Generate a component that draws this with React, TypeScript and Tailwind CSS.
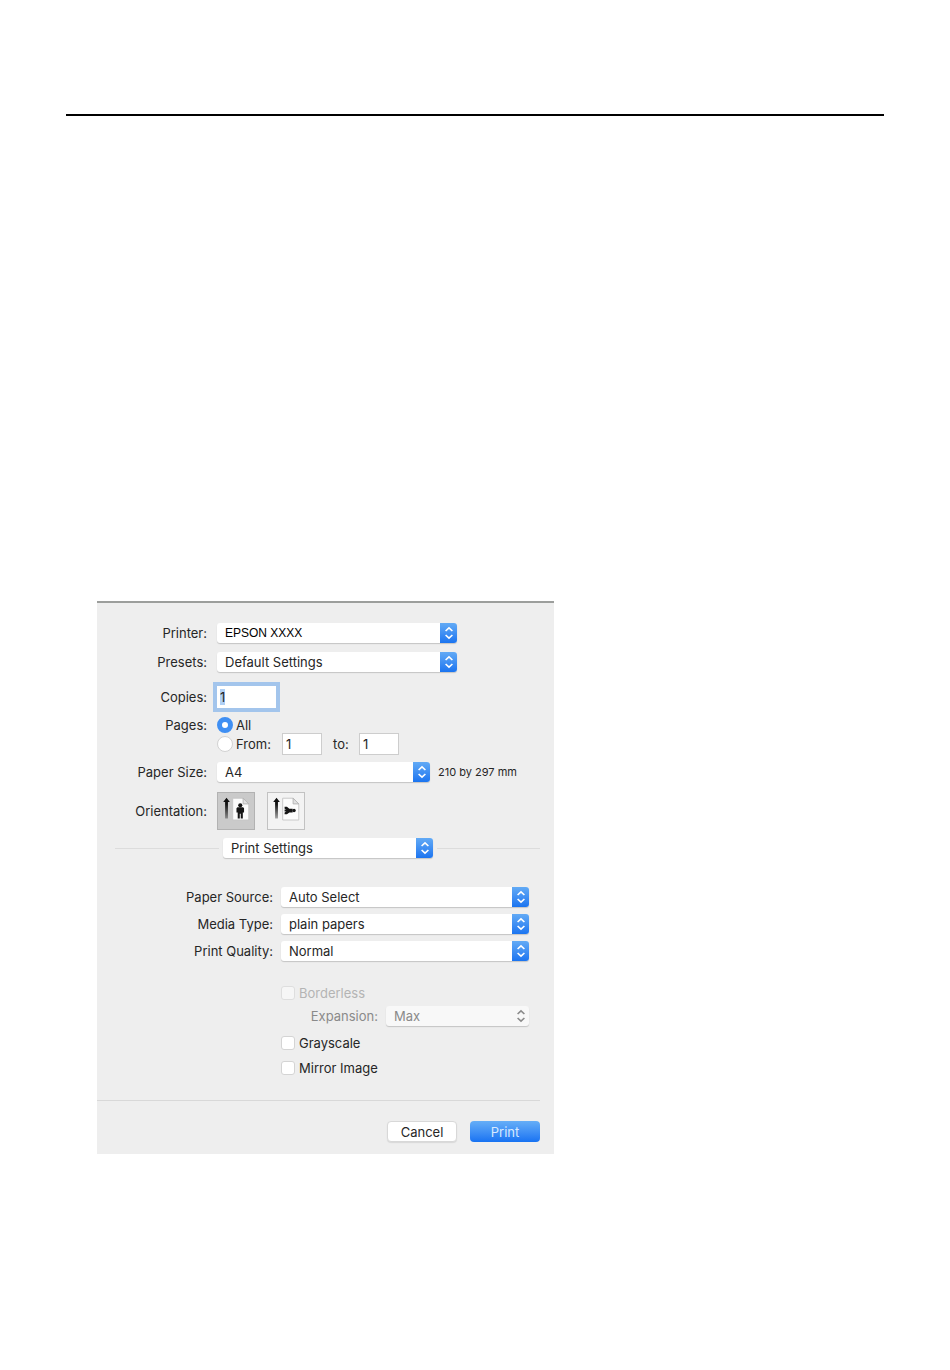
import clsx from 'clsx';
import { useEffect, useRef, useState } from 'react';
import type { ReactNode } from 'react';

type SelectFieldProps = {
  id: string;
  value: string;
  label?: string;
  className?: string;
  textClassName?: string;
  disabled?: boolean;
};

function Chevrons() {
  return (
    <svg viewBox="0 0 10 14" className="h-[14px] w-[10px]" fill="none" stroke="currentColor" strokeWidth="1.6">
      <path d="M1.6 5 5 1.8 8.4 5M1.6 9 5 12.2 8.4 9" />
    </svg>
  );
}

function SelectField({ id, value, label, className, textClassName, disabled = false }: SelectFieldProps) {
  return (
    <div className={clsx('relative h-5', className)}>
      <select
        id={id}
        aria-label={label}
        disabled={disabled}
        className={clsx(
          'block h-5 w-full appearance-none rounded-[3px] pr-5 pl-2 shadow-[0_1px_1px_#c4c4c4]',
          disabled ? 'bg-[#f8f8f8] text-[#8a8a8a] opacity-100' : 'bg-white text-[#262626]',
          textClassName,
        )}
      >
        <option>{value}</option>
      </select>
      <span
        className={clsx(
          'pointer-events-none absolute inset-y-0 right-0 flex w-[17px] items-center justify-center rounded-r-[3px]',
          disabled ? 'text-[#8a8a8a]' : 'bg-linear-to-b from-[#62aaf5] to-[#1a74f0] text-white',
        )}
      >
        <Chevrons />
      </span>
    </div>
  );
}

type RowProps = {
  label: string;
  htmlFor?: string;
  className?: string;
  wide?: boolean;
  children: ReactNode;
};

function Row({ label, htmlFor, className, wide = false, children }: RowProps) {
  const labelClass = clsx('flex-none text-right', wide ? 'mr-2 w-[176px]' : 'mr-[10px] w-[110px]');

  return (
    <div className={clsx('flex items-center', className)}>
      {htmlFor ? (
        <label htmlFor={htmlFor} className={labelClass}>
          {label}
        </label>
      ) : (
        <span className={labelClass}>{label}</span>
      )}
      {children}
    </div>
  );
}

type RadioProps = { id: string; checked: boolean; onChange: () => void };

function Radio({ id, checked, onChange }: RadioProps) {
  return (
    <input
      id={id}
      type="radio"
      name="pages"
      checked={checked}
      onChange={onChange}
      className="size-4 flex-none appearance-none rounded-full border border-[#d2d2d2] bg-white checked:border-[5px] checked:border-[#3f8ff3]"
    />
  );
}

type CheckProps = { id: string; label: string; className?: string; disabled?: boolean };

function Check({ id, label, className, disabled }: CheckProps) {
  return (
    <div className={clsx('ml-[184px] flex h-4 items-center gap-1', className)}>
      <input
        id={id}
        type="checkbox"
        disabled={disabled}
        className="size-[14px] flex-none appearance-none rounded-[3px] border border-[#d4d4d4] bg-white checked:bg-[#3f8ff3] disabled:border-[#dedede] disabled:bg-[#f6f6f6]"
      />
      <label htmlFor={id} className={disabled ? 'text-[#b4b4b4]' : undefined}>
        {label}
      </label>
    </div>
  );
}

function OrientationIcon({ landscape = false }: { landscape?: boolean }) {
  const fade = landscape ? 'fade-landscape' : 'fade-portrait';

  return (
    <svg viewBox="0 0 38 38" className="size-full">
      <defs>
        <linearGradient id={fade} x1="0" y1="0" x2="0" y2="1">
          <stop offset="0.3" stopColor="#111" />
          <stop offset="1" stopColor="#111" stopOpacity="0.35" />
        </linearGradient>
      </defs>
      <path d="M9 5 12.5 9.5H10.5V27H7.5V9.5H5.5Z" fill={`url(#${fade})`} />
      <path d="M15.5 5.5H26.5L32.5 11.5V28.5H15.5Z" fill="#fcfcfc" stroke="#c6c6c6" />
      <path d="M26.5 5.5V11.5H32.5Z" fill="#e2e2e2" stroke="#b4b4b4" />
      {landscape ? (
        <g fill="#161616">
          <path d="M17.5 14.5H20L22.5 16.5H26V20.5H22.5L20 22.5H17.5V20.5L19.5 19.5H17.5V17.5H19.5L17.5 16.5Z" />
          <circle cx="27.5" cy="18.5" r="1.8" />
        </g>
      ) : (
        <g fill="#161616">
          <circle cx="23.5" cy="13" r="2.2" />
          <path d="M20.5 15H26.5L27.5 16V20.5H26.2V27H24V22H23V27H20.8V20.5H19.5V16Z" />
        </g>
      )}
    </svg>
  );
}

function PrintDialog() {
  const [pages, setPages] = useState('all');
  const [orientation, setOrientation] = useState('portrait');
  const copiesRef = useRef<HTMLInputElement>(null);

  useEffect(() => {
    copiesRef.current?.focus();
    copiesRef.current?.select();
  }, []);

  const orientationClass = (active: boolean) =>
    clsx('size-[38px] border', active ? 'border-[#b2b2b2] bg-[#cacaca]' : 'border-[#c2c2c2] bg-[#f3f3f3]');

  return (
    <form
      onSubmit={(e) => e.preventDefault()}
      className="w-full max-w-[457px] border-t-2 border-[#9c9e9c] bg-[#eeeeee] pt-5 pb-3 text-[13px] leading-5 text-[#262626]"
    >
      <Row label="Printer:" htmlFor="printer">
        <SelectField
          id="printer"
          value="EPSON XXXX"
          className="w-[240px]"
          textClassName="font-['Liberation_Sans',Arial,sans-serif] text-[12px] text-black"
        />
      </Row>
      <Row label="Presets:" htmlFor="presets" className="mt-[9px]">
        <SelectField id="presets" value="Default Settings" className="w-[240px]" />
      </Row>
      <Row label="Copies:" htmlFor="copies" className="mt-[14px]">
        <input
          ref={copiesRef}
          id="copies"
          defaultValue="1"
          className="h-[22px] w-[59px] bg-white px-[3px] ring-4 ring-[#a3c5ec] outline-none selection:bg-[#b0d0f5] selection:text-[#262626]"
        />
      </Row>

      <Row label="Pages:" className="mt-[9px] h-4">
        <Radio id="pages-all" checked={pages === 'all'} onChange={() => setPages('all')} />
        <label htmlFor="pages-all" className="ml-[3px]">
          All
        </label>
      </Row>
      <div className="ml-[120px] flex h-[22px] items-center">
        <Radio id="pages-range" checked={pages === 'range'} onChange={() => setPages('range')} />
        <label htmlFor="pages-range" className="ml-[3px] w-[46px]">
          From:
        </label>
        <input
          aria-label="From page"
          defaultValue="1"
          className="h-[22px] w-10 border border-[#cdcdcd] bg-white px-[3px]"
        />
        <label htmlFor="page-to" className="ml-[11px] w-[26px]">
          to:
        </label>
        <input id="page-to" defaultValue="1" className="h-[22px] w-10 border border-[#cdcdcd] bg-white px-[3px]" />
      </div>

      <Row label="Paper Size:" htmlFor="paper-size" className="mt-[7px]">
        <SelectField id="paper-size" value="A4" className="w-[213px]" />
        <span className="ml-2 text-[11px]">210 by 297 mm</span>
      </Row>
      <Row label="Orientation:" className="mt-[10px]">
        <div className="flex gap-3">
          <button
            type="button"
            aria-label="Portrait"
            aria-pressed={orientation === 'portrait'}
            onClick={() => setOrientation('portrait')}
            className={orientationClass(orientation === 'portrait')}
          >
            <OrientationIcon />
          </button>
          <button
            type="button"
            aria-label="Landscape"
            aria-pressed={orientation === 'landscape'}
            onClick={() => setOrientation('landscape')}
            className={orientationClass(orientation === 'landscape')}
          >
            <OrientationIcon landscape />
          </button>
        </div>
      </Row>

      <div className="mt-2 mr-[14px] ml-[18px] flex items-center gap-1">
        <span className="h-px w-[104px] bg-[#dcdcdc]" />
        <SelectField id="section" label="Section" value="Print Settings" className="w-[210px]" />
        <span className="h-px flex-1 bg-[#dcdcdc]" />
      </div>

      <Row wide label="Paper Source:" htmlFor="paper-source" className="mt-[29px]">
        <SelectField id="paper-source" value="Auto Select" className="w-[248px]" />
      </Row>
      <Row wide label="Media Type:" htmlFor="media-type" className="mt-[7px]">
        <SelectField id="media-type" value="plain papers" className="w-[248px]" />
      </Row>
      <Row wide label="Print Quality:" htmlFor="print-quality" className="mt-[7px]">
        <SelectField id="print-quality" value="Normal" className="w-[248px]" />
      </Row>

      <Check id="borderless" label="Borderless" className="mt-6" disabled />
      <div className="mt-[5px] flex items-center">
        <label htmlFor="expansion" className="mr-2 w-[281px] text-right text-[#8a8a8a]">
          Expansion:
        </label>
        <SelectField id="expansion" value="Max" className="w-[143px]" disabled />
      </div>
      <Check id="grayscale" label="Grayscale" className="mt-[9px]" />
      <Check id="mirror-image" label="Mirror Image" className="mt-[9px]" />

      <hr className="mt-6 mr-[14px] border-[#d8d8d8]" />
      <div className="mt-5 mr-[14px] flex justify-end gap-[13px]">
        <button
          type="button"
          className="h-[21px] w-[70px] rounded-[4px] border border-[#d8d8d8] bg-white leading-[18px] shadow-[0_1px_1px_#d8d8d8]"
        >
          Cancel
        </button>
        <button
          type="submit"
          className="h-[21px] w-[70px] rounded-[4px] bg-linear-to-b from-[#66aef7] to-[#1672f2] text-[#d8eaff]"
        >
          Print
        </button>
      </div>
    </form>
  );
}

export default function App() {
  return (
    <div className="min-h-screen bg-white px-[66px] pt-[114px] font-['Inter','Liberation_Sans',sans-serif]">
      <hr className="border-t-2 border-black" />
      <main className="mt-[485px] ml-[31px]">
        <PrintDialog />
      </main>
    </div>
  );
}
